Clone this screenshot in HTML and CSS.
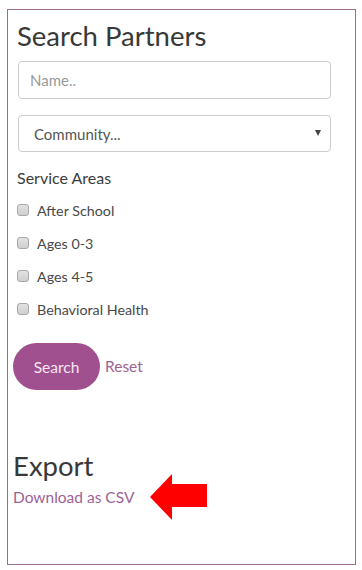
FILE: index.html
```html
<!DOCTYPE html>
<html>
<head>
<meta charset="utf-8">
<link rel="stylesheet" href="styles.css">
</head>
<body>
<div class="panel">
  <h1 class="title">Search Partners</h1>
  <input class="field" type="text" placeholder="Name..">
  <div class="select-wrap">
    <select class="field select">
      <option>Community...</option>
    </select>
  </div>
  <div class="group-label">Service Areas</div>
  <ul class="checks">
    <li><label><input type="checkbox" class="cb"><span>After School</span></label></li>
    <li><label><input type="checkbox" class="cb"><span>Ages 0-3</span></label></li>
    <li><label><input type="checkbox" class="cb"><span>Ages 4-5</span></label></li>
    <li><label><input type="checkbox" class="cb"><span>Behavioral Health</span></label></li>
  </ul>
  <div class="actions">
    <button class="btn">Search</button>
    <a class="link reset" href="#">Reset</a>
  </div>
  <h2 class="export">Export</h2>
  <div class="download-row">
    <a class="link" href="#">Download as CSV</a>
    <svg class="arrow" width="58" height="46" viewBox="0 0 58 46">
      <polygon points="0,23 22,0 22,10 57,10 57,33 22,33 22,46" fill="#ff0000"/>
    </svg>
  </div>
</div>
</body>
</html>
```
FILE: styles.css
```css
* { box-sizing: border-box; }
html, body { margin: 0; padding: 0; background: #fff; }
body { font-family: Lato, "Open Sans", sans-serif; color: #333; }
.panel {
  margin: 9px 0 0 7px;
  width: 349px;
  height: 556px;
  border: 1px solid #9c6b93;
  padding: 0 25px 0 9px;
  display: flex;
  flex-direction: column;
  align-items: flex-start;
}
.title {
  margin: 10px 0 0 0;
  font-size: 27.5px;
  font-weight: 400;
  line-height: 32px;
  color: #383838;
}
.field {
  width: 313px;
  height: 38px;
  margin-left: 1px;
  border: 1px solid #ccc;
  border-radius: 4px;
  font-family: inherit;
  font-size: 15px;
  color: #555;
  background: #fff;
}
input.field {
  margin-top: 9px;
  padding: 0 11px;
}
input.field::placeholder { color: #9a9a9a; }
.select-wrap {
  position: relative;
  margin-top: 16px;
}
.select {
  appearance: none;
  -webkit-appearance: none;
  padding: 0 15px;
  height: 37px;
  color: #555;
}
.select-wrap::after {
  content: "";
  position: absolute;
  right: 10px;
  top: 15px;
  border-left: 3.5px solid transparent;
  border-right: 3.5px solid transparent;
  border-top: 6px solid #444;
}
.group-label {
  margin: 17px 0 0 0;
  font-size: 16px;
  line-height: 18px;
  color: #3c3c3c;
}
.checks {
  list-style: none;
  margin: 15px 0 0 0;
  padding: 0;
  display: flex;
  flex-direction: column;
  gap: 15px;
}
.checks label {
  display: flex;
  align-items: center;
  gap: 8px;
  font-size: 14.3px;
  line-height: 18px;
  color: #484848;
}
.cb {
  appearance: none;
  -webkit-appearance: none;
  margin: -3px 0 0 0;
  width: 12px;
  height: 12px;
  border: 1px solid #a8a8a8;
  border-radius: 3px;
  background: linear-gradient(#e2e2e2, #cfcfcf);
}
.actions {
  margin: 24px 0 0 -4px;
  display: flex;
  align-items: center;
  gap: 5px;
}
.btn {
  width: 87px;
  height: 47px;
  border: none;
  border-radius: 24px;
  background: #a0508f;
  color: #f6e6f3;
  font-family: inherit;
  font-size: 15.5px;
  padding: 0;
}
.link {
  color: #9e6293;
  text-decoration: none;
  font-size: 15.5px;
}
.reset { margin-top: -2px; }
.export {
  margin: 60px 0 0 -4px;
  font-size: 27.5px;
  font-weight: 400;
  line-height: 32px;
  color: #383838;
}
.download-row {
  margin: -8px 0 0 -4px;
  display: flex;
  align-items: center;
  gap: 16px;
}
.arrow { display: block; }
```
